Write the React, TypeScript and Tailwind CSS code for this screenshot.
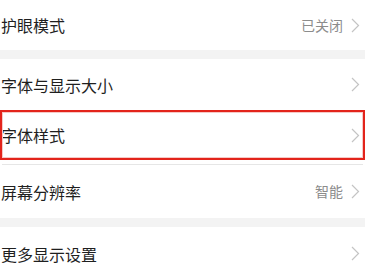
import React from 'react'

function Chevron() {
  return (
    <svg width="9" height="15" viewBox="0 0 9 15" className="shrink-0">
      <path d="M1 1 L7.5 7.5 L1 14" fill="none" stroke="#c4c4c4" strokeWidth="1.2" />
    </svg>
  )
}

function Row({
  label,
  value,
  className = '',
  children,
}: {
  label: string
  value?: string
  className?: string
  children?: React.ReactNode
}) {
  return (
    <div className={`relative flex items-center bg-white pl-[1px] pr-[5px] ${className}`}>
      <span className="flex-1 text-[16px] text-[#1f1f1f]">{label}</span>
      {value && <span className="mr-[8px] text-[14px] text-[#8c8c8c]">{value}</span>}
      <Chevron />
      {children}
    </div>
  )
}

export default function App() {
  return (
    <div
      className="h-[271px] w-[365px] overflow-hidden bg-white"
      style={{ fontFamily: '"Noto Sans CJK SC", "Noto Sans", sans-serif' }}
    >
      <Row label="护眼模式" value="已关闭" className="h-[50px]" />
      <div className="h-[9px] bg-[#f3f3f3]" />
      <Row label="字体与显示大小" className="h-[51px]" />
      <Row label="字体样式" className="h-[50px]">
        <div className="pointer-events-none absolute inset-0 border-2 border-[#e3241b]">
          <div className="h-full w-full border border-[#f6c9c6]" />
        </div>
      </Row>
      <div className="mx-[2px] h-[5px] border-b border-[#e6e6e6] bg-white" />
      <Row label="屏幕分辨率" value="智能" className="h-[53px]" />
      <div className="h-[9px] bg-[#f3f3f3]" />
      <Row label="更多显示设置" className="h-[53px]" />
    </div>
  )
}
